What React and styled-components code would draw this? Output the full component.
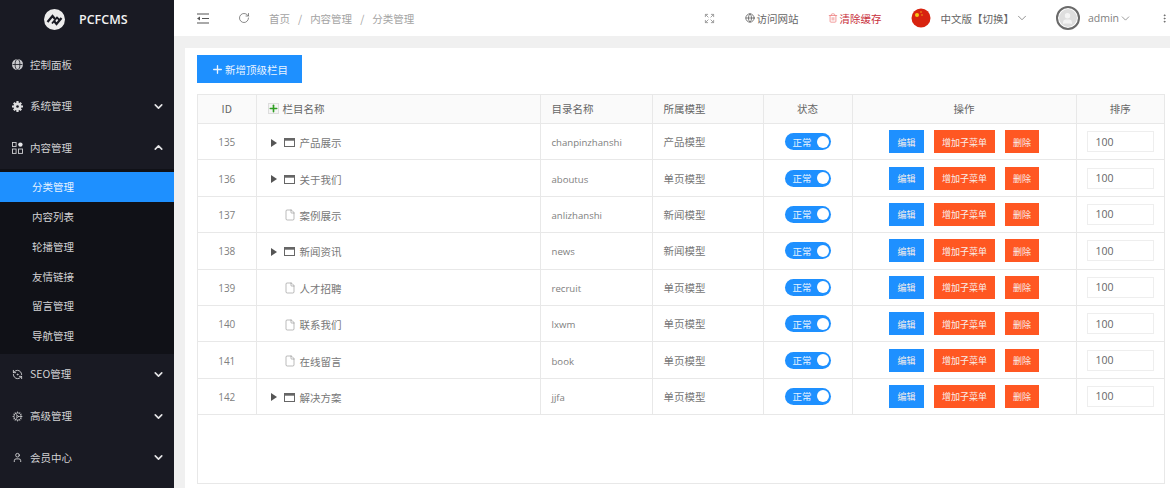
import React from "react";
import styled, { createGlobalStyle } from "styled-components";
import { ChevronDown, ChevronUp, Plus, RotateCw, Expand, Globe, Trash2, User, Cog, RefreshCcwDot, EllipsisVertical, File as FileIcon } from "lucide-react";

const Global = createGlobalStyle`
  html, body { margin: 0; padding: 0; background: #f0f0f0; }
  body { font-family: "Noto Sans CJK SC", "Open Sans", sans-serif; font-size: 10.5px; color: #666; }
  * { box-sizing: border-box; }
`;
const Page = styled.div`display: flex; width: 1170px; height: 488px; overflow: hidden;`;
const Side = styled.aside`width: 174px; flex: none; background: #191a23; color: #d2d2d4; display: flex; flex-direction: column;`;
const Brand = styled.div`height: 44px; display: flex; align-items: flex-start; padding: 9px 0 0 44px; gap: 14px; color: #f2f2f2; font: 600 12.5px/22px "Open Sans", sans-serif;`;
const MenuItem = styled.div`height: 41.6px; display: flex; align-items: center; padding: 0 9px 0 12px; gap: 7px; line-height: 1;
  & > span { flex: 1; }
  & > svg:last-child { color: #e4e4e6; }`;
const Sub = styled.div`background: #101117; height: 185px; padding-top: 3px; display: flex; flex-direction: column;`;
const SubItem = styled.div`height: 29.8px; display: flex; align-items: center; padding-left: 32px; color: ${p => p.$active ? "#e8f3ff" : "#d2d2d4"}; background: ${p => p.$active ? "#1e90ff" : "transparent"};`;
const Main = styled.main`flex: 1; min-width: 0; display: flex; flex-direction: column;`;
const Top = styled.header`height: 36px; flex: none; background: #fff; display: flex; align-items: center; padding-left: 23px; color: #666;`;
const Crumbs = styled.nav`display: flex; gap: 8px; margin-left: 19px; color: #a3a3a3;`;
const TopRight = styled.div`margin-left: auto; display: flex; align-items: center;`;
const TopLink = styled.div`display: flex; align-items: center; gap: ${p => p.$gap ?? 1}px; margin-left: ${p => p.$ml || 0}px; color: ${p => p.$c || "#666"}; white-space: nowrap;`;
const Avatar = styled.div`width: 24px; height: 24px; border-radius: 50%; border: 2px solid #6a6a6a; box-shadow: inset 0 0 0 1px #fff; background: #dedede; display: flex; align-items: center; justify-content: center; margin-left: 27px; color: #f4f4f4;`;
const Content = styled.section`flex: 1; margin: 12px 0 0 11px; background: #fff; padding: 7px 5px 4px 12px; display: flex; flex-direction: column;`;
const AddBtn = styled.button`width: 105px; height: 28px; border: 0; background: #1e90ff; color: #eaf4ff; font: inherit; display: flex; align-items: center; justify-content: center; gap: 1px; padding: 0; margin-bottom: 11px;`;
const Frame = styled.div`flex: 1; border: 1px solid #e8e8e8; border-top: 0;`;
const Table = styled.table`width: 100%; border-collapse: collapse; table-layout: fixed;
  th, td { border: 1px solid #e8e8e8; padding: 0; text-align: center; font-weight: 400; }
  th { background: #fafafa; height: 29px; color: #666; padding-bottom: 1px; }
  td { height: 36.4px; color: #777; }
  tr > :first-child { border-left: 0; }
  tr > :last-child { border-right: 0; }
`;
const Left = styled.div`display: flex; align-items: center; text-align: left; padding-left: ${p => p.$pl || 0}px;`;
const Tree = styled(Left)`padding-top: 2px;`;
const Pad = styled.td`&& { text-align: left; padding-left: 11px; }`;
const PlusBox = styled.span`width: 11px; height: 11px; margin-right: 4px; border: 1px solid #ddd; background: #f4f4f4; color: #2f9e22; display: inline-flex; align-items: center; justify-content: center; svg { flex: none; }`;
const Caret = styled.span`width: 0; height: 0; border-left: 6px solid #555; border-top: 4.5px solid transparent; border-bottom: 4.5px solid transparent; margin-right: 7px;`;
const Spacer = styled.span`width: 13px; flex: none;`;
const IconSlot = styled.span`width: 12px; flex: none; display: flex; justify-content: center;`;
const Label = styled.span`margin-left: 4px;`;
const Toggle = styled.span`display: inline-flex; align-items: center; justify-content: space-between; width: 46px; height: 17px; border-radius: 9px; background: #1e90ff; color: #e8f3ff; font-size: 9.5px; padding: 0 2px 0 8px;
  i { width: 12px; height: 12px; border-radius: 50%; background: #fff; }`;
const Actions = styled.div`display: flex; justify-content: center; gap: 10px;`;
const Btn = styled.button`height: 23px; width: ${p => p.$w}px; border: 0; padding: 1px 0 0; background: ${p => p.$c}; color: #f8eeea; font: inherit; font-size: 9px;`;
const Sort = styled.input`width: 67px; height: 21px; border: 1px solid #eee; padding: 0 8px; font: 10.5px "Open Sans", sans-serif; color: #666; display: block; margin: 0 auto 0 10px; outline: 0;`;
const Cell = styled.span`font-family: "Open Sans", "Noto Sans CJK SC", sans-serif; font-size: ${p => p.$s || 10}px; color: #808080;`;

const Logo = () => (
  <svg width="21" height="21" viewBox="0 0 21 21" fill="none">
    <circle cx="10.5" cy="10.5" r="10.5" fill="#ececec" />
    <path d="M3.5 13 L8.5 7 L11 10 M17.5 9 L12.5 15 L10 12" stroke="#191a23" strokeWidth="2.2" />
    <path d="M8 14.5 L13 8.5 L15.5 11" stroke="#191a23" strokeWidth="1.8" />
  </svg>
);
const Flag = () => (
  <svg width="20" height="20" viewBox="0 0 20 20">
    <circle cx="10" cy="10" r="9.5" fill="#d8230f" />
    <circle cx="6" cy="7" r="2" fill="#f5c518" />
    <circle cx="10" cy="4" r=".7" fill="#f5c518" /><circle cx="11" cy="7" r=".7" fill="#f5c518" />
  </svg>
);
const Win = () => (
  <svg width="11" height="9" viewBox="0 0 11 9" fill="none"><rect x=".5" y=".5" width="10" height="8" stroke="#666" /><rect x=".5" y=".5" width="10" height="2.2" fill="#666" /></svg>
);
const Toggler = () => (
  <svg width="12" height="11" viewBox="0 0 12 11" fill="none" stroke="#555" strokeWidth="1.2">
    <path d="M0 1h12M5 5.5h7M0 10h12" /><path d="M0 5.5l3-2v4z" fill="#555" stroke="none" />
  </svg>
);
const Planet = () => (
  <svg width="11" height="11" viewBox="0 0 11 11" fill="none">
    <circle cx="5.5" cy="5.5" r="5.5" fill="#c9c9cc" />
    <ellipse cx="5.5" cy="5.5" rx="2.4" ry="5" stroke="#191a23" strokeWidth=".8" />
    <path d="M.5 5.5h10" stroke="#191a23" strokeWidth=".8" />
  </svg>
);
const Gear = () => (
  <svg width="11" height="11" viewBox="0 0 11 11">
    <circle cx="5.5" cy="5.5" r="3.9" fill="#dcdcde" />
    <path d="M4.4 0h2.2v2H4.4zM4.4 9h2.2v2H4.4zM0 4.4h2v2.2H0zM9 4.4h2v2.2H9z" fill="#dcdcde" />
    <path d="M1 2.5 2.5 1 4 2.5 2.5 4zM7 2.5 8.5 1 10 2.5 8.5 4zM1 8.5 2.5 7 4 8.5 2.5 10zM7 8.5 8.5 7 10 8.5 8.5 10z" fill="#dcdcde" />
    <circle cx="5.5" cy="5.5" r="1.3" fill="#191a23" />
  </svg>
);
const Blocks = () => (
  <svg width="11" height="12" viewBox="0 0 11 12" fill="none" stroke="#d2d2d4" strokeWidth=".9">
    <rect x=".5" y=".5" width="3.6" height="4" /><rect x=".5" y="7" width="3.6" height="4.4" /><rect x="6.5" y="7" width="4" height="4.4" />
    <circle cx="8.4" cy="2.6" r="2.2" fill="#e8e8ea" stroke="none" />
  </svg>
);

const rows = [
  [135, "产品展示", "chanpinzhanshi", "产品模型", 1],
  [136, "关于我们", "aboutus", "单页模型", 1],
  [137, "案例展示", "anlizhanshi", "新闻模型", 0],
  [138, "新闻资讯", "news", "新闻模型", 1],
  [139, "人才招聘", "recruit", "单页模型", 0],
  [140, "联系我们", "lxwm", "单页模型", 0],
  [141, "在线留言", "book", "单页模型", 0],
  [142, "解决方案", "jjfa", "单页模型", 1],
];

const Down = () => <ChevronDown size={13} strokeWidth={3} />;

export default function App() {
  return (
    <Page>
      <Global />
      <Side>
        <Brand><Logo />PCFCMS</Brand>
        <MenuItem><Planet /><span>控制面板</span></MenuItem>
        <MenuItem><Gear /><span>系统管理</span><Down /></MenuItem>
        <MenuItem><Blocks /><span>内容管理</span><ChevronUp size={13} strokeWidth={3} /></MenuItem>
        <Sub>
          <SubItem $active>分类管理</SubItem>
          <SubItem>内容列表</SubItem>
          <SubItem>轮播管理</SubItem>
          <SubItem>友情链接</SubItem>
          <SubItem>留言管理</SubItem>
          <SubItem>导航管理</SubItem>
        </Sub>
        <MenuItem><RefreshCcwDot size={11} /><span>SEO管理</span><Down /></MenuItem>
        <MenuItem><Cog size={11} strokeWidth={1.5} /><span>高级管理</span><Down /></MenuItem>
        <MenuItem><User size={11} /><span>会员中心</span><Down /></MenuItem>
      </Side>
      <Main>
        <Top>
          <Toggler />
          <RotateCw size={12} style={{ marginLeft: 29 }} strokeWidth={1.5} />
          <Crumbs><span>首页</span><span>/</span><span>内容管理</span><span>/</span><span>分类管理</span></Crumbs>
          <TopRight>
            <Expand size={11} color="#999" />
            <TopLink $ml={30}><Globe size={10} />访问网站</TopLink>
            <TopLink $ml={30} $c="#c8303c"><Trash2 size={10} color="#e88" />清除缓存</TopLink>
            <TopLink $ml={30}><Flag /></TopLink>
            <TopLink $ml={9} $gap={1}>中文版【切换】<ChevronDown size={14} strokeWidth={1.2} /></TopLink>
            <Avatar><User size={13} fill="#f4f4f4" /></Avatar>
            <TopLink $ml={8} $gap={0}><Cell $s={10.5}>admin</Cell><ChevronDown size={13} strokeWidth={1.2} /></TopLink>
            <EllipsisVertical size={11} style={{ margin: "0 0 0 27px" }} />
          </TopRight>
        </Top>
        <Content>
          <AddBtn><Plus size={13} strokeWidth={2.5} />新增顶级栏目</AddBtn>
          <Frame>
            <Table>
              <colgroup>
                <col style={{ width: 58 }} /><col style={{ width: 284 }} /><col style={{ width: 112 }} /><col style={{ width: 111 }} /><col style={{ width: 89 }} /><col style={{ width: 224 }} /><col />
              </colgroup>
              <thead>
                <tr>
                  <th>ID</th>
                  <th><Left $pl={11}><PlusBox><Plus size={11} strokeWidth={3.5} /></PlusBox>栏目名称</Left></th>
                  <th><Left $pl={11}>目录名称</Left></th>
                  <th><Left $pl={11}>所属模型</Left></th>
                  <th>状态</th>
                  <th>操作</th>
                  <th>排序</th>
                </tr>
              </thead>
              <tbody>
                {rows.map(([id, name, dir, model, kids]) => (
                  <tr key={id}>
                    <td><Cell>{id}</Cell></td>
                    <Pad>
                      <Tree $pl={3}>
                        {kids ? <Caret /> : <Spacer />}
                        <IconSlot>{kids ? <Win /> : <FileIcon size={12} strokeWidth={1} />}</IconSlot>
                        <Label>{name}</Label>
                      </Tree>
                    </Pad>
                    <Pad><Cell $s={9.6}>{dir}</Cell></Pad>
                    <Pad>{model}</Pad>
                    <td><Toggle>正常<i /></Toggle></td>
                    <td>
                      <Actions>
                        <Btn $w={35} $c="#1e90ff">编辑</Btn>
                        <Btn $w={61} $c="#ff5722">增加子菜单</Btn>
                        <Btn $w={34} $c="#ff5722">删除</Btn>
                      </Actions>
                    </td>
                    <td><Sort defaultValue="100" /></td>
                  </tr>
                ))}
              </tbody>
            </Table>
          </Frame>
        </Content>
      </Main>
    </Page>
  );
}
